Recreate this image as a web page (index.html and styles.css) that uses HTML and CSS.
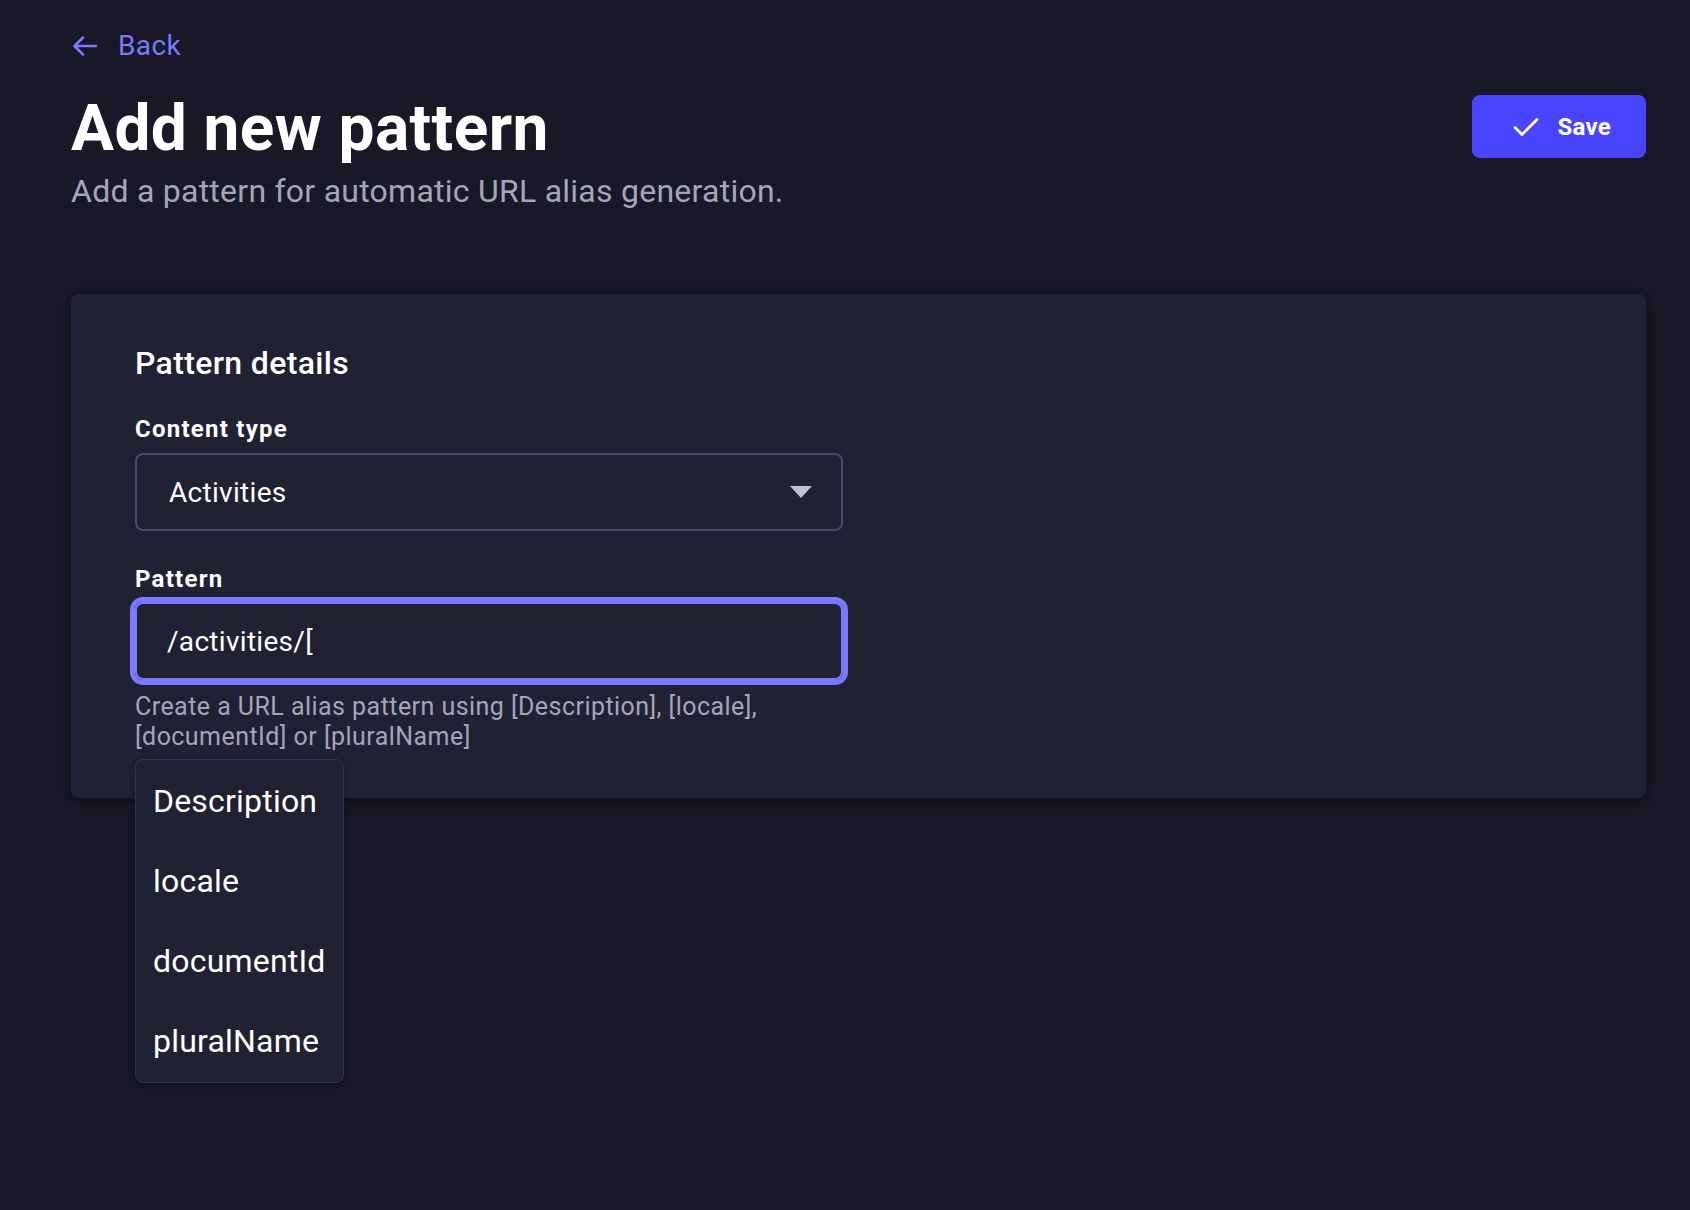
FILE: index.html
```html
<!DOCTYPE html>
<html lang="en">
<head>
<meta charset="utf-8">
<title>Add new pattern</title>
<link rel="stylesheet" href="styles.css">
</head>
<body>
<main class="page">
  <a class="back" href="#">
    <svg class="back-icon" width="26" height="22" viewBox="0 0 26 22" fill="none">
      <path d="M24 11H3M11 2.5L2.5 11L11 19.5" stroke="#7b79ff" stroke-width="2.6" stroke-linecap="round" stroke-linejoin="round"/>
    </svg>
    <span>Back</span>
  </a>

  <header class="header">
    <div class="header-row">
      <h1 class="title">Add new pattern</h1>
      <button class="save" type="button">
        <svg width="26" height="20" viewBox="0 0 26 20" fill="none">
          <path d="M2 10.5L9 17.5L24 2.5" stroke="#ffffff" stroke-width="2.8" stroke-linecap="round" stroke-linejoin="round"/>
        </svg>
        <span>Save</span>
      </button>
    </div>
    <p class="subtitle">Add a pattern for automatic URL alias generation.</p>
  </header>

  <section class="card">
    <h2 class="card-title">Pattern details</h2>

    <div class="field field-select">
      <label class="label">Content type</label>
      <div class="select">
        <span class="select-value">Activities</span>
        <svg class="caret" width="22" height="12" viewBox="0 0 22 12"><path d="M0 0H22L11 12Z" fill="#c0c0cf"/></svg>
      </div>
    </div>

    <div class="field field-pattern">
      <label class="label">Pattern</label>
      <div class="input">/activities/[</div>
      <p class="hint">Create a URL alias pattern using [Description], [locale], [documentId] or [pluralName]</p>
      <ul class="menu">
        <li class="menu-item">Description</li>
        <li class="menu-item">locale</li>
        <li class="menu-item">documentId</li>
        <li class="menu-item">pluralName</li>
      </ul>
    </div>
  </section>
</main>
</body>
</html>
```

FILE: styles.css
```css
* { box-sizing: border-box; }

html, body {
  margin: 0;
  padding: 0;
  background: #181826;
  min-height: 100%;
}

body {
  font-family: Roboto, "Liberation Sans", Arial, sans-serif;
  color: #ffffff;
  height: 1210px;
}

.page {
  padding: 28px 44px 0 71px;
}

.back {
  display: flex;
  align-items: center;
  gap: 20px;
  height: 36px;
  color: #7b79ff;
  text-decoration: none;
  font-size: 28px;
  line-height: 36px;
  letter-spacing: 0.4px;
  width: max-content;
}

.back-icon { margin-left: 1px; }

.header { margin-top: 25px; }

.header-row {
  display: flex;
  justify-content: space-between;
  align-items: center;
}

.title {
  margin: 0;
  font-size: 64px;
  line-height: 80px;
  font-weight: 700;
  letter-spacing: 0.4px;
  color: #ffffff;
}

.save {
  display: flex;
  align-items: center;
  gap: 18px;
  height: 63px;
  padding: 0 35px 0 41px;
  margin-top: -5px;
  border: 0;
  border-radius: 8px;
  background: #4945ff;
  color: #ffffff;
  font-family: inherit;
  font-size: 24px;
  font-weight: 700;
  letter-spacing: 0.3px;
}

.subtitle {
  margin: 2px 0 0;
  font-size: 32px;
  line-height: 40px;
  letter-spacing: 0.25px;
  color: #a5a5ba;
}

.card {
  margin-top: 83px;
  background: #212134;
  border-radius: 8px;
  padding: 49px 64px 46px;
  box-shadow: 0 2px 14px rgba(3, 3, 5, 0.45);
}

.card-title {
  margin: 0;
  font-size: 32px;
  line-height: 40px;
  font-weight: 500;
  letter-spacing: 0.35px;
}

.field {
  width: 708px;
}

.field-select { margin-top: 30px; }
.field-pattern { margin-top: 32px; position: relative; }

.label {
  display: block;
  font-size: 24px;
  line-height: 32px;
  font-weight: 700;
  letter-spacing: 1.25px;
  color: #ffffff;
}

.select {
  margin-top: 8px;
  height: 78px;
  border: 2px solid #4a4a6a;
  border-radius: 8px;
  display: flex;
  align-items: center;
  justify-content: space-between;
  padding: 0 29px 0 32px;
  font-size: 28px;
  letter-spacing: 0.3px;
}

.input {
  margin-top: 7px;
  height: 78px;
  border: 2px solid #7b79ff;
  border-radius: 8px;
  box-shadow: 0 0 0 5px #7b79ff;
  display: flex;
  align-items: center;
  padding: 0 32px 0 30px;
  font-size: 28px;
  letter-spacing: 0.3px;
}

.hint {
  margin: 12px 0 0;
  font-size: 25px;
  line-height: 30px;
  letter-spacing: 0.45px;
  color: #a5a5ba;
}

.menu {
  position: absolute;
  left: 0;
  top: calc(100% + 7px);
  margin: 0;
  list-style: none;
  width: 209px;
  padding: 1px 0;
  background: #212134;
  border: 1px solid #32324d;
  border-radius: 8px;
  box-shadow: 0 2px 8px rgba(3, 3, 5, 0.3);
}

.menu-item {
  height: 80px;
  display: flex;
  align-items: center;
  padding-left: 17px;
  font-size: 32px;
  letter-spacing: 0.2px;
  white-space: nowrap;
  color: #ffffff;
}
```
